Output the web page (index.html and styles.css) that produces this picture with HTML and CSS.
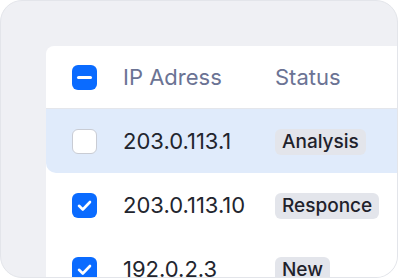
FILE: index.html
```html
<!DOCTYPE html>
<html>
<head>
<meta charset="utf-8">
<link rel="stylesheet" href="styles.css">
</head>
<body>
<div class="frame">
  <div class="table">
    <div class="row head">
      <span class="cb cb-on">
        <svg width="25" height="25" viewBox="0 0 25 25"><line x1="6.5" y1="12.5" x2="18.5" y2="12.5" stroke="#fff" stroke-width="3" stroke-linecap="round"/></svg>
      </span>
      <span class="ip">IP Adress</span>
      <span class="status">Status</span>
    </div>
    <div class="row sel">
      <span class="cb cb-off"></span>
      <span class="ip">203.0.113.1</span>
      <span class="status"><span class="badge">Analysis</span></span>
    </div>
    <div class="row">
      <span class="cb cb-on">
        <svg width="25" height="25" viewBox="0 0 25 25"><polyline points="7,12.8 10.8,16.5 18,9" fill="none" stroke="#fff" stroke-width="2.6" stroke-linecap="round" stroke-linejoin="round"/></svg>
      </span>
      <span class="ip">203.0.113.10</span>
      <span class="status"><span class="badge">Responce</span></span>
    </div>
    <div class="row">
      <span class="cb cb-on">
        <svg width="25" height="25" viewBox="0 0 25 25"><polyline points="7,12.8 10.8,16.5 18,9" fill="none" stroke="#fff" stroke-width="2.6" stroke-linecap="round" stroke-linejoin="round"/></svg>
      </span>
      <span class="ip">192.0.2.3</span>
      <span class="status"><span class="badge">New</span></span>
    </div>
  </div>
</div>
</body>
</html>
```
FILE: styles.css
```css
html, body {
  margin: 0;
  padding: 0;
  background: #ffffff;
}
body {
  font-family: Inter, "Noto Sans", sans-serif;
  width: 400px;
  height: 280px;
  overflow: hidden;
}
.frame {
  box-sizing: border-box;
  width: 398px;
  height: 278px;
  border: 1px solid #e3e5ea;
  border-radius: 22px;
  background: #eff0f4;
  overflow: hidden;
  padding: 45px 0 0 45px;
}
.table {
  width: 400px;
  height: 300px;
  background: #ffffff;
  border-top-left-radius: 8px;
}
.row {
  display: flex;
  align-items: center;
  height: 64px;
  padding-left: 26px;
}
.row.head {
  height: 62px;
  border-bottom: 1px solid #e4e6eb;
  color: #6b7394;
  font-size: 22px;
}
.row.sel {
  background: #e0ebfb;
  border-bottom-left-radius: 10px;
}
.cb {
  box-sizing: border-box;
  width: 25px;
  height: 25px;
  border-radius: 6px;
  flex: none;
  display: flex;
}
.cb-on {
  background: #0a6bff;
}
.cb-off {
  background: #ffffff;
  border: 1.5px solid #c9ccd4;
}
.ip {
  margin-left: 26px;
  width: 152px;
  font-size: 22px;
  color: #22252e;
}
.head .ip {
  color: #6b7394;
}
.status {
  font-size: 22px;
}
.badge {
  display: inline-block;
  background: #e3e5eb;
  color: #1f222b;
  font-size: 19px;
  font-weight: 500;
  line-height: 26px;
  height: 26px;
  padding: 0 7px;
  border-radius: 6px;
}
```
